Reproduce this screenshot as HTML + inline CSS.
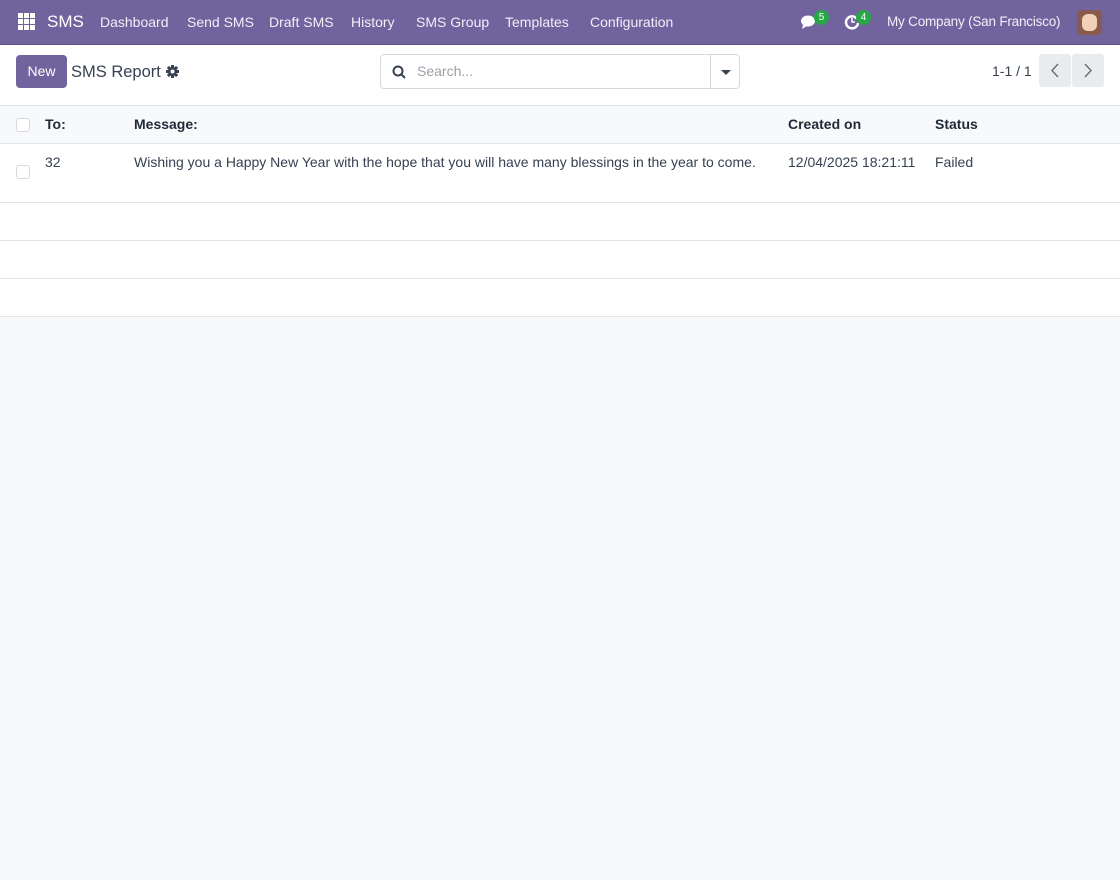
<!DOCTYPE html>
<html><head><style>
*{box-sizing:border-box;margin:0;padding:0}
body{width:1120px;height:880px;background:#f8f9fb;font-family:"Liberation Sans",sans-serif;font-size:14px;color:#374151;position:relative;overflow:hidden}
.nav{position:absolute;left:0;top:0;width:1120px;height:45px;background:#71639e;border-bottom:1px solid #5c5083;color:#fff}
.nav span{position:absolute;top:14px;font-size:14px;color:#f1eff7}
.ctl{position:absolute;top:45px;left:0;width:1120px;height:61px;background:#fff;border-bottom:1px solid #e2e5ea}
.row{position:absolute;left:0;width:1120px;background:#fff;border-bottom:1px solid #e2e5ea}
.t{position:absolute;font-size:14px}
.cb{position:absolute;left:16px;width:14px;height:14px;border:1px solid #d5d9df;border-radius:3px;background:#fff}
.badge{position:absolute;background:#28a745;color:#fff;font-size:10px;border-radius:8px;width:15px;height:15px;text-align:center;line-height:15px}
</style></head><body>
<div class="nav">
<svg style="position:absolute;left:18px;top:13px" width="17" height="17"><g fill="#fff"><rect x="0" y="0" width="5" height="5"/><rect x="6" y="0" width="5" height="5"/><rect x="12" y="0" width="5" height="5"/><rect x="0" y="6" width="5" height="5"/><rect x="6" y="6" width="5" height="5"/><rect x="12" y="6" width="5" height="5"/><rect x="0" y="12" width="5" height="5"/><rect x="6" y="12" width="5" height="5"/><rect x="12" y="12" width="5" height="5"/></g></svg>
<span style="left:47px;top:12px;font-size:17px;color:#fff">SMS</span>
<span style="left:100px">Dashboard</span><span style="left:187px">Send SMS</span><span style="left:269px">Draft SMS</span><span style="left:351px">History</span><span style="left:416px">SMS Group</span><span style="left:505px">Templates</span><span style="left:590px">Configuration</span>
<svg style="position:absolute;left:800px;top:14px" width="18" height="16"><ellipse cx="8" cy="7" rx="7" ry="5.5" fill="#fff"/><path d="M3 11 L2 15 L7 12Z" fill="#fff"/></svg>
<div class="badge" style="left:814px;top:10px">5</div>
<svg style="position:absolute;left:844px;top:14px" width="16" height="16"><path d="M13 5 A6 6 0 1 0 14 9" fill="none" stroke="#fff" stroke-width="2.5"/><path d="M8 4 V8 H11" fill="none" stroke="#fff" stroke-width="1.5"/></svg>
<div class="badge" style="left:856px;top:10px">4</div>
<span style="left:887px;font-size:13.5px;letter-spacing:-0.2px">My Company (San Francisco)</span>
<div style="position:absolute;left:1077px;top:10px;width:25px;height:25px;border-radius:4px;background:#8a5a4e"><div style="margin:4px 5px;width:15px;height:17px;background:#f1d2b8;border-radius:6px"></div></div>
</div>
<div class="ctl">
<div style="position:absolute;left:16px;top:10px;width:51px;height:33px;background:#71639e;border-radius:4px;color:#fff;text-align:center;line-height:33px;font-size:14px">New</div>
<div class="t" style="left:71px;top:18px;font-size:16.5px;color:#374151">SMS Report</div>
<svg style="position:absolute;left:166px;top:20px" width="13" height="13"><g fill="#374151"><circle cx="6.5" cy="6.5" r="4.5"/><rect x="5" y="0" width="3" height="13"/><rect x="0" y="5" width="13" height="3"/><rect x="5" y="0" width="3" height="13" transform="rotate(45 6.5 6.5)"/><rect x="5" y="0" width="3" height="13" transform="rotate(-45 6.5 6.5)"/></g><circle cx="6.5" cy="6.5" r="2" fill="#fff"/></svg>
<div style="position:absolute;left:380px;top:9px;width:360px;height:35px;border:1px solid #d5d9df;border-radius:4px;background:#fff">
<svg style="position:absolute;left:11px;top:10px" width="14" height="14"><circle cx="6" cy="6" r="4.5" fill="none" stroke="#374151" stroke-width="2"/><path d="M9 9 L13 13" stroke="#374151" stroke-width="2"/></svg>
<span style="position:absolute;left:36px;top:8px;color:#9aa0a8">Search...</span>
<div style="position:absolute;left:329px;top:0;width:1px;height:33px;background:#d5d9df"></div>
<div style="position:absolute;left:340px;top:15px;border:5px solid transparent;border-top-color:#374151;border-bottom:0"></div>
</div>
<div class="t" style="left:992px;top:18px">1-1 / 1</div>
<svg style="position:absolute;left:1039px;top:9px" width="32" height="33"><rect width="32" height="33" rx="3" fill="#e9ecef"/><path d="M19 10 L13 16.5 L19 23" fill="none" stroke="#666" stroke-width="1.3"/></svg>
<svg style="position:absolute;left:1072px;top:9px" width="32" height="33"><rect width="32" height="33" rx="3" fill="#e9ecef"/><path d="M13 10 L19 16.5 L13 23" fill="none" stroke="#666" stroke-width="1.3"/></svg>
</div>
<div class="row" style="top:106px;height:38px;background:#f8f9fb">
<div class="cb" style="top:12px"></div>
<div class="t" style="left:45px;top:10px;font-weight:bold;color:#1f2937">To:</div>
<div class="t" style="left:134px;top:10px;font-weight:bold;color:#1f2937">Message:</div>
<div class="t" style="left:788px;top:10px;font-weight:bold;color:#1f2937">Created on</div>
<div class="t" style="left:935px;top:10px;font-weight:bold;color:#1f2937">Status</div>
</div>
<div class="row" style="top:144px;height:59px">
<div class="cb" style="top:21px"></div>
<div class="t" style="left:45px;top:10px">32</div>
<div class="t" style="left:134px;top:10px">Wishing you a Happy New Year with the hope that you will have many blessings in the year to come.</div>
<div class="t" style="left:788px;top:10px">12/04/2025 18:21:11</div>
<div class="t" style="left:935px;top:10px">Failed</div>
</div>
<div class="row" style="top:203px;height:38px"></div>
<div class="row" style="top:241px;height:38px"></div>
<div class="row" style="top:279px;height:38px"></div>
</body></html>
